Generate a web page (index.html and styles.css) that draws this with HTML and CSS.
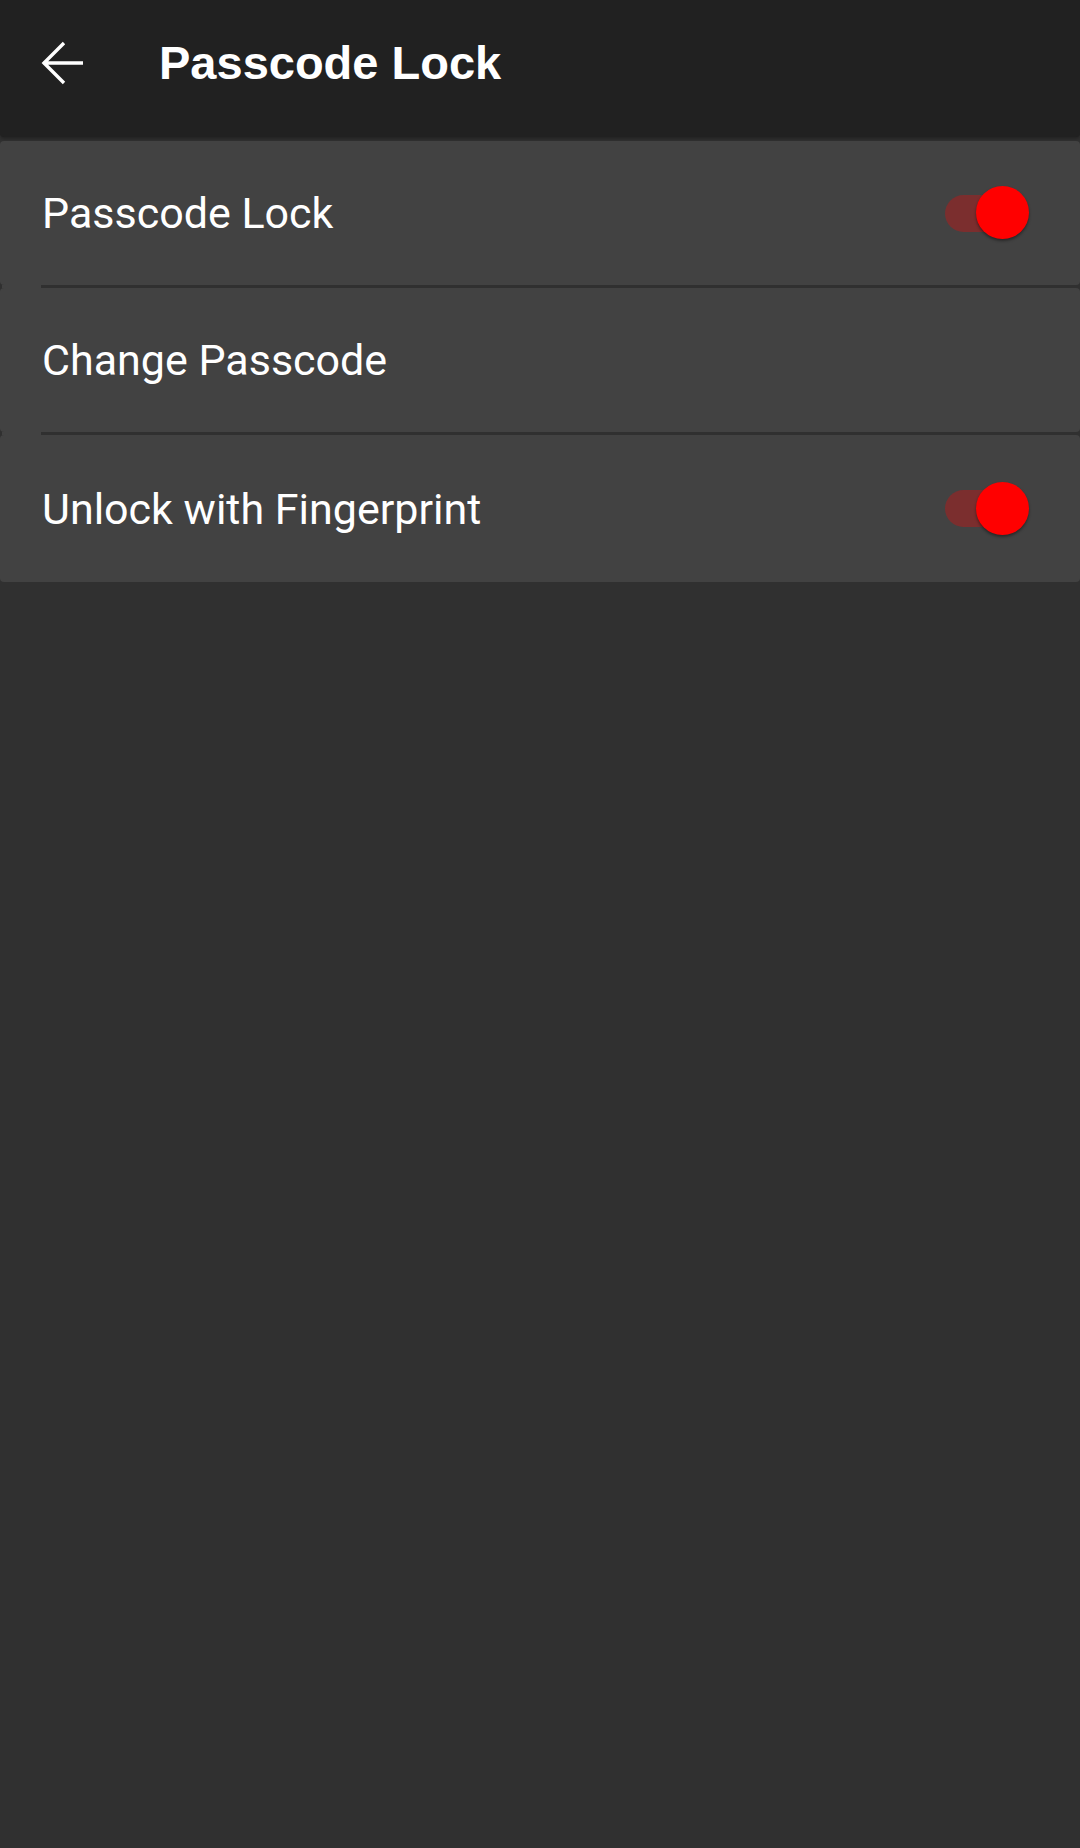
FILE: index.html
```html
<!DOCTYPE html>
<html lang="en">
<head>
    <meta charset="UTF-8">
    <meta name="viewport" content="width=device-width, initial-scale=1.0">
    <title>Passcode Lock</title>
    <link rel="stylesheet" href="styles.css">
</head>
<body>

    <div class="header">
        <span class="back">
            <svg width="44" height="46" viewBox="0 0 44 46">
                <path d="M2 22 H42 M23 2 L3 22 L23 42" fill="none" stroke="#ffffff" stroke-width="3.4"/>
            </svg>
        </span>
        <span class="title">Passcode Lock</span>
    </div>

    <!-- Lista de opcoes -->
    <div class="list">
        <div class="row">
            <span class="label">Passcode Lock</span>
            <span class="switch on"><span class="track"></span><span class="thumb"></span></span>
        </div>
        <div class="row">
            <span class="label">Change Passcode</span>
        </div>
        <div class="row">
            <span class="label">Unlock with Fingerprint</span>
            <span class="switch on"><span class="track"></span><span class="thumb"></span></span>
        </div>
    </div>

</body>
</html>
```

FILE: styles.css
```css
body {
    font-family: 'Roboto', 'Liberation Sans', sans-serif;
    background-color: #303030;
    margin: 0;
    padding: 0;
    height: 1848px;
    overflow: hidden;
}

.header {
    background-color: #212121;
    height: 137px;
    display: flex;
    align-items: center;
    border-radius: 0 0 4px 4px;
    box-shadow: 0 2px 3px rgba(0, 0, 0, 0.25);
    margin-bottom: 4px;
}

.back {
    display: flex;
    margin-left: 41px;
    margin-top: -10px;
}

.title {
    font-family: 'Liberation Sans', Arial, sans-serif;
    font-weight: bold;
    font-size: 47px;
    color: #ffffff;
    margin-left: 74px;
    margin-top: -12px;
}

.list {
    display: flex;
    flex-direction: column;
    gap: 3px;
}

.row {
    position: relative;
    background-color: #424242;
    border-radius: 4px;
    height: 144px;
    display: flex;
    align-items: center;
    justify-content: space-between;
    padding: 0 51px 0 42px;
}

/* o divisor comeca em 41px, entao cobre o espaco da esquerda */
.row + .row::before {
    content: "";
    position: absolute;
    left: 2px;
    top: -3px;
    width: 39px;
    height: 3px;
    background-color: #424242;
}

.row:last-child {
    height: 147px;
}

.label {
    font-size: 43px;
    color: #ffffff;
}

.switch {
    position: relative;
    width: 84px;
    height: 54px;
    display: flex;
    align-items: center;
}

.track {
    width: 76px;
    height: 37px;
    border-radius: 19px;
    background-color: rgba(255, 0, 0, 0.3);
}

.thumb {
    position: absolute;
    right: 0;
    top: 0;
    width: 53px;
    height: 53px;
    border-radius: 50%;
    background-color: #ff0000;
    box-shadow: 0 2px 3px rgba(0, 0, 0, 0.4);
}
```
